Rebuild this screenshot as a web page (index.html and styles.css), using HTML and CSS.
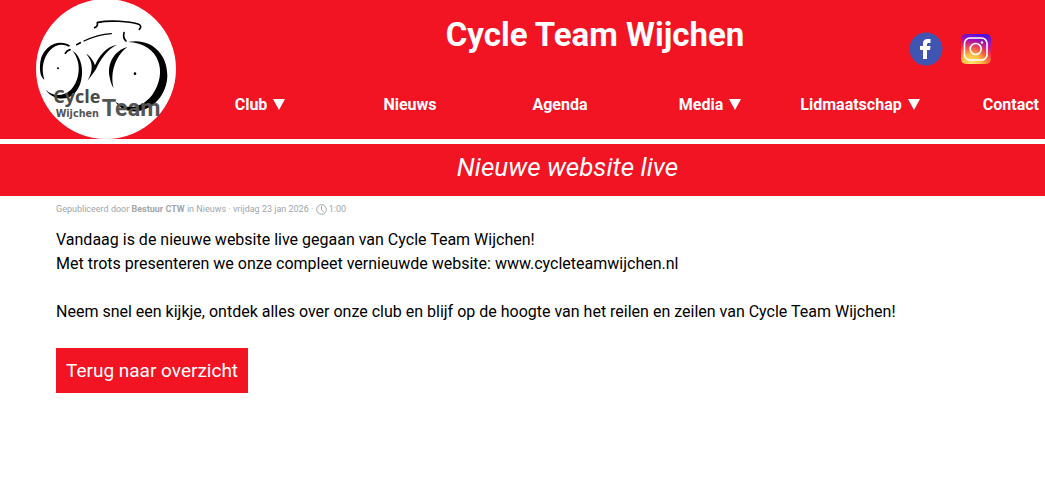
FILE: index.html
```html
<!DOCTYPE html>
<html lang="nl">
<head>
    <meta charset="UTF-8">
    <meta name="viewport" content="width=device-width, initial-scale=1.0">
    <title>Nieuwe website live - Cycle Team Wijchen</title>
    <link rel="stylesheet" href="styles.css">
</head>
<body>

    <!-- Header -->
    <header class="header">
        <a class="logo" href="#" aria-label="Cycle Team Wijchen">
            <svg viewBox="30 0 420 420" width="140" height="140">
                <circle cx="240" cy="207" r="210" fill="#fff"/>
                <!-- Frame and handlebar -->
                <g fill="none" stroke="#000" stroke-linecap="round">
                    <path d="M206 83 Q216 80 214 68" stroke-width="5"/>
                    <path d="M216 67 C250 60 310 64 336 72 Q350 78 340 88" stroke-width="5"/>
                    <path d="M294 98 Q290 114 300 123" stroke-width="5"/>
                    <path d="M174 123 Q215 104 256 101" stroke-width="4"/>
                    <path d="M152 134 L163 128 M118 160 Q122 152 132 149" stroke-width="5"/>
                </g>
                <!-- Wheels -->
                <path d="M133 137 C97 114 50 140 43 185 C39 215 45 232 55 239 C45 205 51 175 72 151 C90 132 112 130 128 140Z"/>
                <path d="M139 152 C176 172 177 248 147 278 C123 306 78 299 59 269 C82 291 112 290 134 270 C164 238 167 184 139 152Z"/>
                <path d="M304 141 C266 151 242 190 251 232 Q255 254 263 265 C251 215 270 167 304 141Z"/>
                <path d="M306 126 C370 112 424 157 424 226 C424 287 372 343 312 333 Q280 326 268 305 C309 335 352 319 379 284 C426 218 402 131 306 126Z"/>
                <!-- Frame tubes -->
                <path d="M181 162 C193 168 202 182 207 196 C218 168 242 139 274 134 C242 148 222 181 209 209 L185 242 C201 213 203 187 181 162Z"/>
                <circle cx="96" cy="205" r="3"/>
                <circle cx="327" cy="221" r="4"/>
                <text class="logo-cycle" x="82" y="308">Cycle</text>
                <text class="logo-wijchen" x="89" y="350">Wijchen</text>
                <text class="logo-team" x="227" y="348">Team</text>
            </svg>
        </a>

        <div class="header-main">
            <div class="header-top">
                <h1>Cycle Team Wijchen</h1>
                <div class="social">
                    <a href="#" aria-label="Facebook">
                        <svg viewBox="0 0 34 34" width="34" height="34">
                            <circle cx="17" cy="17" r="16.500" fill="#4054b2"/>
                            <path d="M14 27V18H11V14H14V11.500C14 8.500 15.500 7 18.500 7H21.500V11H19.500C18.500 11 18 11.500 18 12.500V14H21.500L21 18H18V27Z" fill="#fff"/>
                        </svg>
                    </a>
                    <a href="#" aria-label="Instagram">
                        <svg viewBox="0 0 32 32" width="32" height="32">
                            <defs>
                                <linearGradient id="insta-base" x1="0.600" y1="0" x2="0.400" y2="1">
                                    <stop offset="0" stop-color="#4a12e0"/>
                                    <stop offset="0.300" stop-color="#b414a8"/>
                                    <stop offset="0.600" stop-color="#f0244c"/>
                                    <stop offset="1" stop-color="#ff9a30"/>
                                </linearGradient>
                                <radialGradient id="insta-glow" cx="0.350" cy="1" r="0.800">
                                    <stop offset="0" stop-color="#ffe478"/>
                                    <stop offset="0.400" stop-color="#ffc040"/>
                                    <stop offset="1" stop-color="#ff5030" stop-opacity="0"/>
                                </radialGradient>
                            </defs>
                            <rect x="1" y="1" width="30" height="30" rx="5" fill="url(#insta-base)"/>
                            <rect x="1" y="1" width="30" height="30" rx="5" fill="url(#insta-glow)"/>
                            <rect x="4.500" y="5" width="22.500" height="22" rx="5.500" fill="none" stroke="#fff" stroke-width="1.600"/>
                            <circle cx="15.700" cy="16" r="5.500" fill="none" stroke="#fff" stroke-width="1.600"/>
                            <circle cx="22" cy="9.500" r="1.200" fill="#fff"/>
                        </svg>
                    </a>
                </div>
            </div>

            <!-- Menu -->
            <nav class="menu">
                <a href="#">Club <span class="arrow"></span></a>
                <a href="#">Nieuws</a>
                <a href="#">Agenda</a>
                <a href="#">Media <span class="arrow"></span></a>
                <a href="#">Lidmaatschap <span class="arrow"></span></a>
                <a href="#">Contact</a>
            </nav>
        </div>
    </header>

    <!-- Page title -->
    <div class="banner">
        <h2>Nieuwe website live</h2>
    </div>

    <!-- Article -->
    <main class="article">
        <div class="meta">
            Gepubliceerd door <b>Bestuur CTW</b> in <a href="#">Nieuws</a> · vrijdag 23 jan 2026 ·
            <svg class="clock" viewBox="0 0 11 11" width="11" height="11" fill="none" stroke="currentColor">
                <circle cx="5.500" cy="5.500" r="4.800"/>
                <path d="M5.500 2V5.800L7.800 8"/>
            </svg>
            1:00
        </div>
        <p>
            Vandaag is de nieuwe website live gegaan van Cycle Team Wijchen!<br>
            Met trots presenteren we onze compleet vernieuwde website: www.cycleteamwijchen.nl
        </p>
        <p>Neem snel een kijkje, ontdek alles over onze club en blijf op de hoogte van het reilen en zeilen van Cycle Team Wijchen!</p>
        <button class="button" type="button">Terug naar overzicht</button>
    </main>

</body>
</html>
```
FILE: styles.css
```css
/* General */
* {
    margin: 0;
    padding: 0;
    box-sizing: border-box;
}

body {
    font-family: Roboto, Arial, sans-serif;
    font-size: 16px;
    line-height: 24px;
    background-color: #fff;
    color: #000;
}

a {
    color: inherit;
    text-decoration: none;
}

svg {
    display: block;
}

/* Header */
.header {
    display: grid;
    grid-template-columns: 149px 1fr;
    padding-left: 36px;
    background-color: #f21323;
    color: #fff;
}

.logo {
    height: 139px;
    overflow: hidden;
}

.logo text {
    font-family: "Open Sans", sans-serif;
    font-weight: bold;
    fill: #4a4a4a;
}

.logo .logo-cycle {
    font-size: 54px;
}

.logo .logo-wijchen {
    font-family: "DejaVu Sans", sans-serif;
    font-size: 29px;
    fill: #555;
}

.logo .logo-team {
    font-family: Roboto, sans-serif;
    font-size: 70px;
    fill: #555;
}

.header-top {
    display: flex;
    align-items: flex-start;
    padding: 15px 53px 0 96px;
    height: 93px;
}

.header-top h1 {
    flex: 1;
    font-size: 33px;
    line-height: 40px;
    text-align: center;
}

.social {
    display: flex;
    align-items: center;
    gap: 17px;
    padding-top: 17px;
}

/* Menu */
.menu {
    display: grid;
    grid-template-columns: repeat(5, 1fr) 110px;
    text-align: center;
    font-weight: bold;
}

.menu a:last-child {
    text-align: right;
    padding-right: 6px;
}

.arrow {
    display: inline-block;
    margin-left: 2px;
    border: 6px solid transparent;
    border-top: 11px solid #fff;
    border-bottom: 0;
}

/* Banner */
.banner {
    margin-top: 5px;
    padding: 3px 0 9px 90px;
    background-color: #f21323;
    color: #fff;
    text-align: center;
}

.banner h2 {
    font-size: 26px;
    line-height: 40px;
    font-weight: normal;
    font-style: italic;
}

/* Article */
.article {
    padding: 5px 56px 24px;
}

.meta {
    font-size: 9px;
    line-height: 16px;
    color: #a0a6aa;
    margin-bottom: 11px;
}

.clock {
    display: inline-block;
    vertical-align: middle;
}

.article p {
    margin-bottom: 24px;
}

.button {
    padding: 10px;
    border: 0;
    background-color: #f21323;
    color: #fff;
    font-family: inherit;
    font-size: 19px;
    line-height: 25px;
    cursor: pointer;
}
```
